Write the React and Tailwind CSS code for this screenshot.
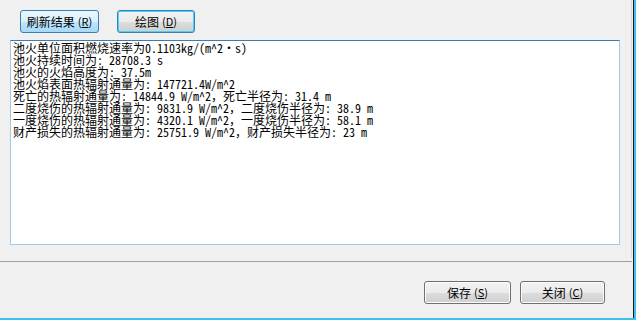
import React from 'react';

const lines = [
  '池火单位面积燃烧速率为0.1103kg/(m^2·s)',
  '池火持续时间为: 28708.3 s',
  '池火的火焰高度为: 37.5m',
  '池火焰表面热辐射通量为: 147721.4W/m^2',
  '死亡的热辐射通量为: 14844.9 W/m^2，死亡半径为: 31.4 m',
  '二度烧伤的热辐射通量为: 9831.9 W/m^2，二度烧伤半径为: 38.9 m',
  '一度烧伤的热辐射通量为: 4320.1 W/m^2，一度烧伤半径为: 58.1 m',
  '财产损失的热辐射通量为: 25751.9 W/m^2，财产损失半径为: 23 m',
];

const mono = { fontFamily: '"Noto Sans Mono CJK SC", "Liberation Mono", "Noto Sans CJK SC", monospace' };
const ui = { fontFamily: '"Noto Sans CJK SC", "Liberation Sans", sans-serif' };

function Line({ text }) {
  // SimSun draws the middle dot full width
  const parts = text.split('·');
  return (
    <div className="h-[12px] leading-[12px] whitespace-pre">
      {parts.map((p, i) => (
        <React.Fragment key={i}>
          {i > 0 && <span className="inline-block w-[12px] text-center">·</span>}
          {p}
        </React.Fragment>
      ))}
    </div>
  );
}

function WinButton({ label, hot, variant = 'plain', className = '' }) {
  const styles = {
    hover: 'border-[#3c7fb1] bg-[linear-gradient(#eaf6fd_0%,#d9f0fc_50%,#bee6fd_51%,#a7d9f5_100%)]',
    def: 'border-[#3c7fb1] bg-[linear-gradient(#f2f2f2_0%,#ebebeb_50%,#dddddd_51%,#cfcfcf_100%)] shadow-[inset_0_0_0_1px_#48d2f8]',
    plain: 'border-[#707070] bg-[linear-gradient(#f2f2f2_0%,#ebebeb_50%,#dddddd_51%,#cfcfcf_100%)] shadow-[inset_0_0_0_1px_#fcfcfc]',
  };
  return (
    <button
      style={ui}
      className={`h-[23px] rounded-[3px] border text-[12px] leading-none text-black flex items-center justify-center ${styles[variant]} ${className}`}
    >
      {label}
      <span className="ml-[3px] text-[11px]">(<span className="underline">{hot}</span>)</span>
    </button>
  );
}

export default function App() {
  return (
    <div className="w-[636px] h-[320px] bg-[#3fc2ea] overflow-hidden">
      <div className="w-[634px] h-[318px] border-r border-[#1a1a1a] bg-[#f0f0f0] flex flex-col">
        <div className="h-[258px] ml-[3px] w-[629px] border-r border-[#dadada] flex flex-col">
          <div className="flex gap-[18px] pt-[10px] pl-[17px]">
            <WinButton label="刷新结果" hot="R" variant="hover" className="w-[79px]" />
            <WinButton label="绘图" hot="D" variant="def" className="w-[78px]" />
          </div>
          <div
            style={mono}
            className="mt-[7px] ml-[7px] w-[610px] h-[205px] bg-white border border-[#a4c9e3] border-t-[#3d7bad] pl-[2px] pt-[1px] text-[12px] text-black"
          >
            {lines.map((t, i) => <Line key={i} text={t} />)}
          </div>
        </div>
        <div className="mt-[3px] border-t border-[#a0a0a0] h-[1px] bg-white mr-[1px]" />
        <div className="flex-1 flex justify-end gap-[9px] pt-[19px] pr-[28px]">
          <WinButton label="保存" hot="S" className="w-[87px]" />
          <WinButton label="关闭" hot="C" className="w-[85px]" />
        </div>
      </div>
    </div>
  );
}
